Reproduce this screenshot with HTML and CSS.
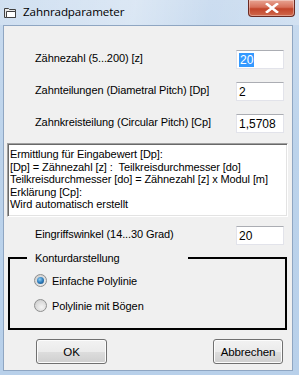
FILE: index.html
```html
<!DOCTYPE html>
<html lang="de">
<head>
<meta charset="UTF-8">
<title>Zahnradparameter</title>
<link rel="stylesheet" href="styles.css">
</head>
<body>
<div class="window">
	<div class="titlebar">
		<svg class="appicon" width="12" height="12" viewBox="0 0 12 12">
			<path d="M0.5 2.5h4l1 1h6v8h-11z" fill="#e8e8e8" stroke="#404040"/>
			<path d="M2.5 5.5h9v6h-9z" fill="#fff" stroke="#404040"/>
		</svg>
		<span class="title">Zahnradparameter</span>
		<div class="close">
			<svg width="14" height="10" viewBox="0 0 14 10">
				<path d="M2 1l10 8M12 1l-10 8" stroke="#fff" stroke-width="2.6" stroke-linecap="square"/>
			</svg>
		</div>
	</div>

	<div class="client">
		<div class="row first">
			<span class="label">Zähnezahl (5...200) [z]</span>
			<div class="field"><span class="sel">20</span></div>
		</div>
		<div class="row">
			<span class="label">Zahnteilungen (Diametral Pitch) [Dp]</span>
			<div class="field">2</div>
		</div>
		<div class="row">
			<span class="label">Zahnkreisteilung (Circular Pitch) [Cp]</span>
			<div class="field">1,5708</div>
		</div>

		<div class="memo">
			Ermittlung für Eingabewert [Dp]:<br>
			[Dp] = Zähnezahl [z] : &nbsp;Teilkreisdurchmesser [do]<br>
			Teilkreisdurchmesser [do] = Zähnezahl [z] x Modul [m]<br>
			Erklärung [Cp]:<br>
			Wird automatisch erstellt
		</div>

		<div class="row angle">
			<span class="label">Eingriffswinkel (14...30 Grad)</span>
			<div class="field">20</div>
		</div>

		<div class="group">
			<div class="legend">Konturdarstellung</div>
			<div class="option"><span class="radio checked"></span>Einfache Polylinie</div>
			<div class="option"><span class="radio"></span>Polylinie mit Bögen</div>
		</div>

		<div class="buttons">
			<div class="btn">OK</div>
			<div class="btn">Abbrechen</div>
		</div>
	</div>
</div>
</body>
</html>
```

FILE: styles.css
```css
* { margin: 0; padding: 0; box-sizing: border-box; }
html, body { width: 299px; height: 375px; overflow: hidden; }
body { font-family: "Liberation Sans", Arial, sans-serif; font-size: 11px; letter-spacing: -0.1px; color: #000; }

.window { width: 299px; height: 375px; display: flex; flex-direction: column; background: linear-gradient(to bottom, #c9dbef 0, #bcd3eb 40%, #b8d0ea 100%); }

.titlebar { height: 25px; display: flex; align-items: flex-start; padding-left: 4px; background: linear-gradient(100deg, rgba(255,255,255,0.15) 0, rgba(255,255,255,0.35) 45%, rgba(255,255,255,0.05) 70%, rgba(255,255,255,0.2) 100%); }
.appicon { margin-top: 6px; }
.title { margin: 4px 0 0 7px; font-family: "Open Sans", "Noto Sans", sans-serif; font-size: 11.6px; letter-spacing: -0.1px; color: #000; }
.close { margin-left: auto; margin-right: 4px; width: 47px; height: 17px; border: 1px solid #6b2a22; border-top: none; border-radius: 0 0 4px 4px; display: flex; align-items: center; justify-content: center; background: linear-gradient(to bottom, #e8a493 0, #d7705a 45%, #c2442a 55%, #d0694c 100%); box-shadow: inset 0 0 0 1px rgba(255,255,255,0.35); }

.client { margin: 0 6px 4px 3px; flex: 1; background: #f0f0f0; border: 1px solid #8fa6c2; display: flex; flex-direction: column; }

.row { display: grid; grid-template-columns: 1fr 48px; align-items: center; padding: 0 8px 0 31px; margin-top: 13px; height: 19px; }
.row.first { margin-top: 24px; }
.row.angle { margin-top: 9px; }
.label { position: relative; top: -2px; white-space: nowrap; }
.field { height: 19px; background: #fff; border: 1px solid #e2e3ea; border-top-color: #abadb3; padding: 2px 0 0 2px; font-size: 12px; line-height: 14px; letter-spacing: 0; }
.sel { display: inline-block; background: #3399ff; color: #fff; padding: 0 1px; height: 14px; }

.memo { margin: 10px 4px 0 3px; height: 74px; background: #fff; border: 1px solid; border-color: #a0a0a0 #fff #fff #a0a0a0; box-shadow: inset 1px 1px 0 #696969, inset -1px -1px 0 #e3e3e3; padding: 4px 0 0 2px; line-height: 12.5px; white-space: nowrap; overflow: hidden; }

.group { position: relative; margin: 12px 5px 0 4px; height: 73px; border: 2px solid #000; padding: 15px 0 0 24px; }
.legend { position: absolute; top: -8px; left: 17px; width: 161px; padding-left: 8px; background: #f0f0f0; line-height: 14px; }
.option { display: flex; align-items: center; height: 13px; margin-bottom: 12px; }
.radio { width: 13px; height: 13px; border-radius: 50%; margin-right: 5px; border: 1px solid #8e8f8f; background: radial-gradient(circle at 60% 65%, #f4f4f4 0, #d9d9d9 60%, #c4c4c4 100%); display: flex; align-items: center; justify-content: center; }
.radio.checked::after { content: ""; width: 7px; height: 7px; border-radius: 50%; background: radial-gradient(circle at 40% 35%, #8fd0f5 0, #2f7dbd 50%, #16466f 100%); }

.buttons { display: flex; justify-content: space-between; padding: 0 9px 0 32px; margin-top: 9px; }
.btn { width: 71px; height: 25px; border: 1px solid #707070; border-radius: 3px; display: flex; align-items: center; justify-content: center; background: linear-gradient(to bottom, #f2f2f2 0, #ebebeb 50%, #dddddd 51%, #cfcfcf 100%); box-shadow: inset 0 0 0 1px #fcfcfc; font-size: 11.5px; }
.btn + .btn { width: 70px; }
```
